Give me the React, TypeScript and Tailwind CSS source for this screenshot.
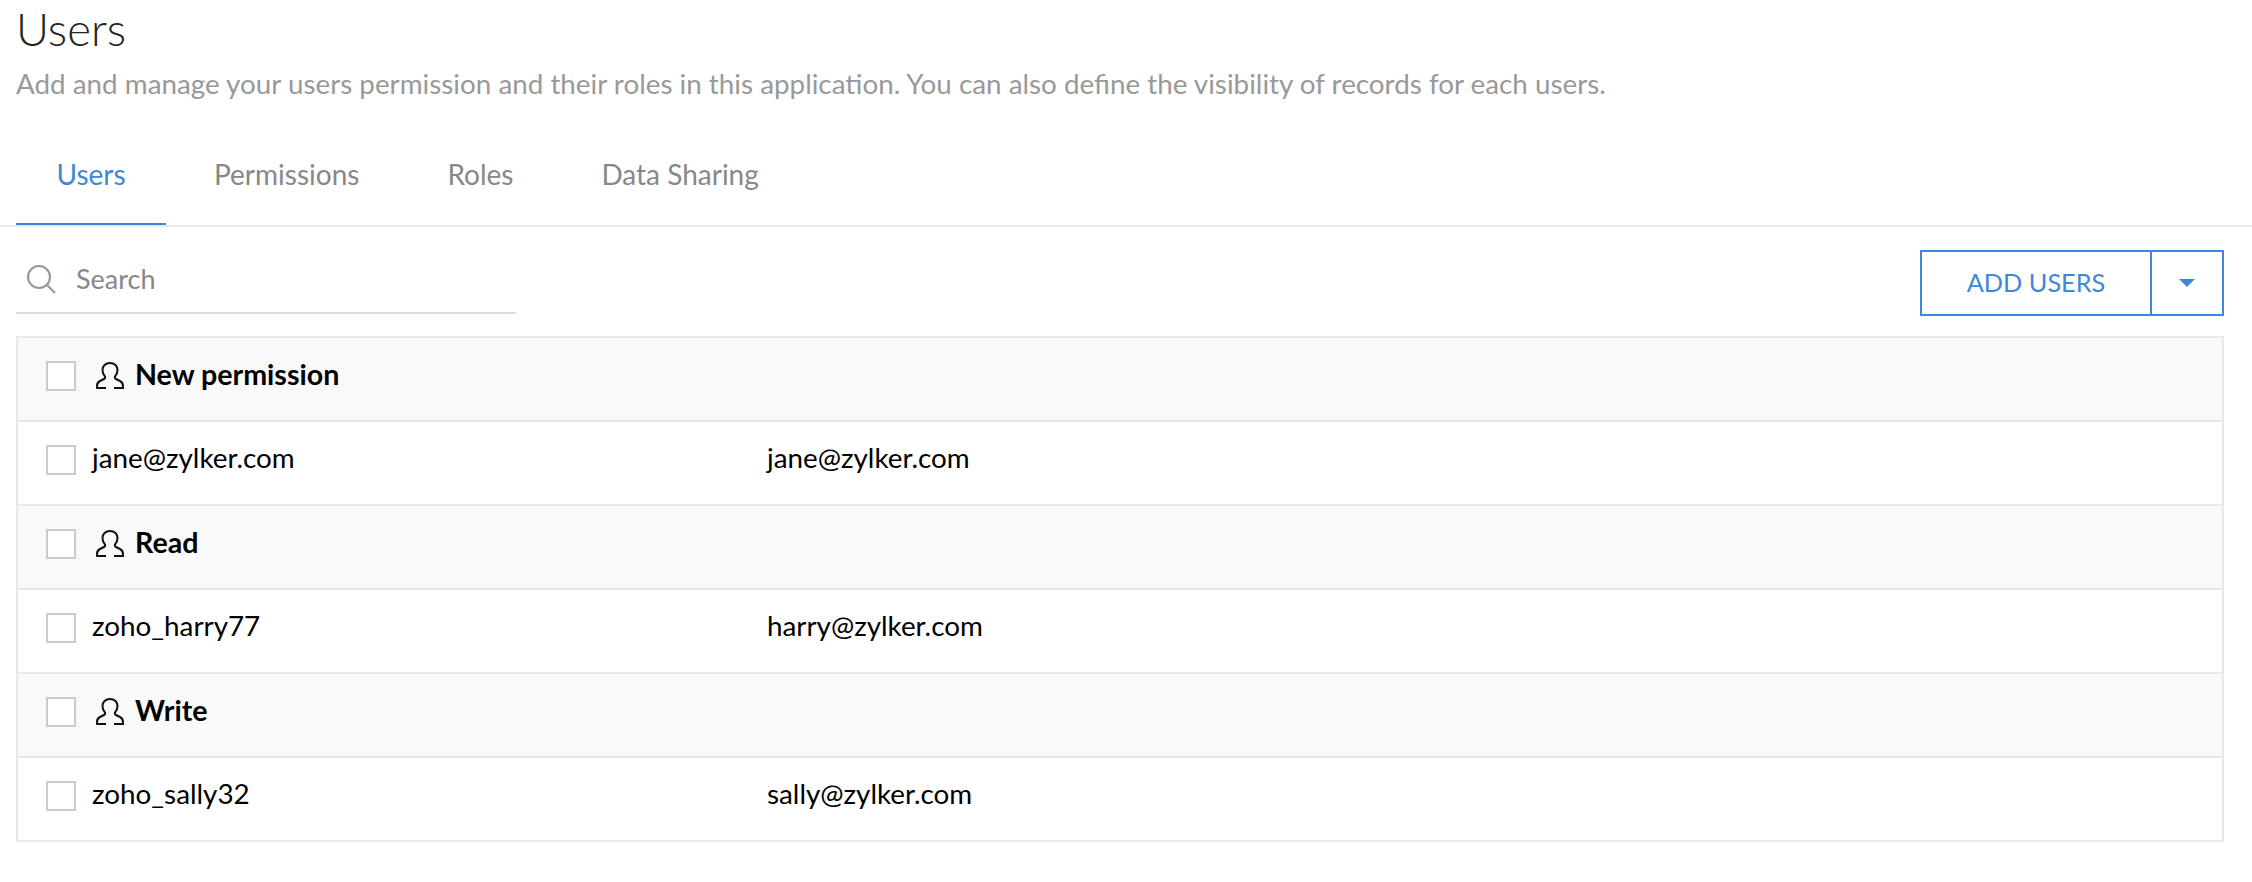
import React from "react";

const rows = [
  { name: "New permission", group: true },
  { name: "jane@zylker.com", email: "jane@zylker.com" },
  { name: "Read", group: true },
  { name: "zoho_harry77", email: "harry@zylker.com" },
  { name: "Write", group: true },
  { name: "zoho_sally32", email: "sally@zylker.com" },
];

const tabs = ["Users", "Permissions", "Roles", "Data Sharing"];

function UserIcon() {
  return (
    <svg width="28" height="27" viewBox="0 0 28 27" fill="none" stroke="#111" strokeWidth="2" className="shrink-0">
      <path d="M14 1C9.500 1 6.500 4 6.500 8c0 3 1 5 2.500 6.500.5 1 0 2-1 2.500l-4 2c-2 1-3 3-3 5v2h9M14 1c4.500 0 7.500 3 7.500 7 0 3-1 5-2.500 6.500-.5 1 0 2 1 2.500l4 2c2 1 3 3 3 5v2h-9" />
    </svg>
  );
}

function SearchIcon() {
  return (
    <svg width="29" height="29" viewBox="0 0 29 29" fill="none" stroke="#999" strokeWidth="2.200" className="shrink-0">
      <circle cx="12" cy="12" r="11" />
      <path d="M20 20l8 8" />
    </svg>
  );
}

export default function App() {
  return (
    <main className="min-h-screen bg-white font-['Lato',sans-serif]">
      {/* Header */}
      <div className="pl-4 pt-[2px]">
        <h1 className="text-[45.5px] leading-[54px] font-light text-[#222]">Users</h1>
        <p className="mt-[11px] text-[27.8px] leading-[34px] text-[#999]">
          Add and manage your users permission and their roles in this application. You can also define the visibility of records for each users.
        </p>
      </div>

      {/* Tabs */}
      <div className="mt-[29px] flex h-[97px] border-b-2 border-[#e8e8e8] pl-4">
        {tabs.map((tab, i) =>
          i === 0 ? (
            <div
              key={tab}
              className="mr-[4px] flex h-[95px] w-[150px] items-center justify-center border-b-2 border-[#3f87d8] pb-[6px] text-[28px] text-[#3f87d8]"
            >
              {tab}
            </div>
          ) : (
            <div key={tab} className="flex h-[95px] items-center px-[44px] pb-[8px] text-[28px] text-[#888]">
              {tab}
            </div>
          )
        )}
      </div>

      {/* Toolbar */}
      <div className="mt-[23px] flex items-start justify-between pl-4 pr-[28px]">
        <div className="flex h-[64px] w-[500px] items-center gap-[20px] border-b-2 border-[#ddd] pb-[4px] pl-[11px]">
          <SearchIcon />
          <span className="text-[27px] text-[#888]">Search</span>
        </div>
        <div className="flex h-[66px] border-2 border-[#3f87d8] text-[#3f87d8]">
          <button className="w-[228px] text-[25.300px]">ADD USERS</button>
          <div className="flex w-[72px] items-center justify-center border-l-2 border-[#3f87d8]">
            <div className="h-0 w-0 border-x-[8px] border-t-[8px] border-x-transparent border-t-[#3f87d8]" />
          </div>
        </div>
      </div>

      {/* Table */}
      <div className="ml-4 mr-[28px] mt-[20px] border-2 border-[#e8e8e8]">
        {rows.map((row, i) => (
          <div
            key={row.name}
            className={`flex items-center pl-[28px] text-[27.800px] text-black ${
              row.group ? "bg-[#f9f9f9]" : "bg-white"
            } ${i < rows.length - 1 ? "h-[84px] border-b-2 border-[#e8e8e8] pb-[6px]" : "h-[82px] pb-[6px]"}`}
          >
            <div className="h-[30px] w-[30px] shrink-0 border-2 border-[#ccc] bg-white" />
            {row.group ? (
              <div className="ml-[20px] flex items-center gap-[11px]">
                <UserIcon />
                <span className="pb-[4px] text-[28.600px] font-bold">{row.name}</span>
              </div>
            ) : (
              <>
                <span className="ml-[16px] w-[675px] shrink-0 pb-[4px]">{row.name}</span>
                <span className="pb-[4px]">{row.email}</span>
              </>
            )}
          </div>
        ))}
      </div>
    </main>
  );
}
